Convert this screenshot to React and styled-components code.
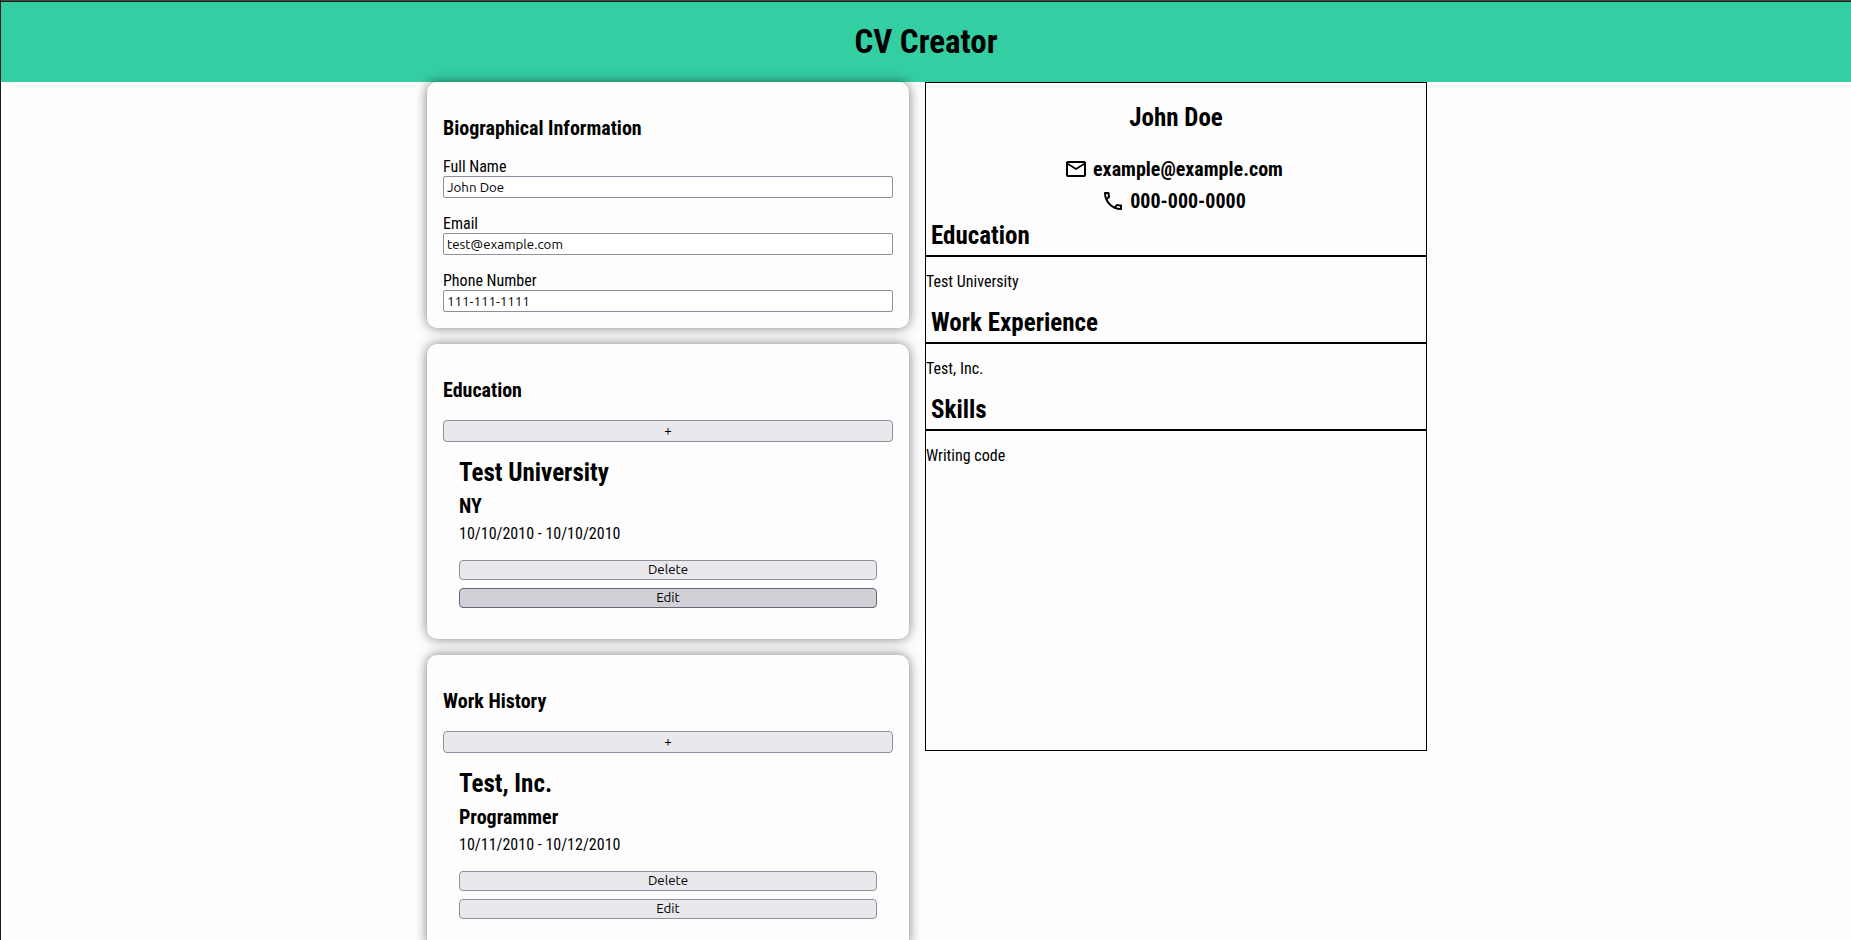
import React from "react";
import styled, { createGlobalStyle } from "styled-components";
import { MdOutlineEmail, MdOutlinePhone } from "react-icons/md";

const GlobalStyle = createGlobalStyle`
  *, *::before, *::after { box-sizing: border-box; }
  html, body { margin: 0; padding: 0; }
  body {
    background: #fdfdfd;
    color: #000;
    font-family: "Liberation Sans Narrow", "Arial Narrow", "Roboto Condensed", "Liberation Sans", sans-serif;
    font-size: 16px;
    line-height: 18px;
  }
  h1, h2, h3, p { margin: 0; }
  input, button {
    font-family: Ubuntu, "Noto Sans", sans-serif;
    line-height: 16px;
    color: #000;
  }
`;

const Page = styled.div`
  height: 100vh;
  overflow: hidden;
  border-left: 1px solid #1c1c1c;
`;

const TopEdge = styled.div`
  height: 2px;
  background: #484848;
  border-bottom: 1px solid #1c1c1c;
`;

const Header = styled.header`
  display: flex;
  align-items: center;
  justify-content: center;
  height: 80px;
  background: #34cea3;
`;

const Title = styled.h1`
  font-size: 33px;
  line-height: 36px;
`;

const Content = styled.main`
  display: grid;
  grid-template-columns: 482px 1fr;
  align-items: start;
  gap: 16px;
  max-width: 1002px;
  margin: 0 auto;
  padding-left: 2px;
`;

const Forms = styled.div`
  display: flex;
  flex-direction: column;
  gap: 16px;
`;

const Card = styled.section`
  display: flex;
  flex-direction: column;
  padding: 35px 16px 16px;
  border-radius: 10px;
  background: #fdfdfd;
  box-shadow: 0 0 12px rgba(0, 0, 0, 0.5);
`;

const CardTitle = styled.h3`
  font-size: 20px;
  line-height: 22px;
  margin-bottom: ${(p) => (p.$roomy ? 19 : 18)}px;
`;

const Fields = styled.form`
  display: flex;
  flex-direction: column;
  gap: 16px;
`;

const Field = styled.label`
  display: flex;
  flex-direction: column;
  line-height: 19px;
`;

const TextBox = styled.input`
  width: 100%;
  height: 22px;
  padding: 1px 3px;
  border: 1px solid #8f8f9d;
  border-radius: 2px;
  background: #fff;
`;

const Button = styled.button`
  width: 100%;
  height: ${(p) => (p.$tall ? 22 : 20)}px;
  padding: 0;
  border: 1px solid ${(p) => (p.$active ? "#676774" : "#8f8f9d")};
  border-radius: 4px;
  background: ${(p) => (p.$active ? "#d0d0d7" : "#e9e9ed")};
`;

const Entry = styled.article`
  padding: 16px 16px 15px;
`;

const EntryTitle = styled.h2`
  font-size: 25px;
  line-height: 30px;
  margin-bottom: 7px;
`;

const EntrySubtitle = styled.h3`
  font-size: 20px;
  line-height: 22px;
  margin-bottom: 8px;
`;

const Actions = styled.div`
  display: flex;
  flex-direction: column;
  gap: 8px;
  margin-top: 17px;
`;

const Preview = styled.section`
  min-height: 669px;
  border: 1px solid #000;
  padding-top: 20px;
`;

const PreviewName = styled.h2`
  font-size: 25px;
  line-height: 30px;
  margin-bottom: 20px;
  text-align: center;
`;

const Contact = styled.h3`
  display: flex;
  align-items: center;
  justify-content: center;
  gap: 5px;
  height: 32px;
  padding-right: 5px;
  font-size: 20px;
  line-height: 22px;

  svg { flex: none; }
`;

const PreviewHeading = styled.h2`
  padding: 4px 5px;
  border-bottom: 2px solid #000;
  font-size: 25px;
  line-height: 30px;
`;

const PreviewText = styled.p`
  padding: 16px 0 13px;
`;

const fields = [
  { id: "name", label: "Full Name", type: "text", value: "John Doe" },
  { id: "email", label: "Email", type: "email", value: "test@example.com" },
  { id: "phone", label: "Phone Number", type: "tel", value: "111-111-1111" },
];

function History({ title, name, detail, dates, editActive }) {
  return (
    <Card>
      <CardTitle $roomy>{title}</CardTitle>
      <Button $tall type="button">+</Button>
      <Entry>
        <EntryTitle>{name}</EntryTitle>
        <EntrySubtitle>{detail}</EntrySubtitle>
        <p>{dates}</p>
        <Actions>
          <Button type="button">Delete</Button>
          <Button type="button" $active={editActive}>Edit</Button>
        </Actions>
      </Entry>
    </Card>
  );
}

const sections = [
  ["Education", "Test University"],
  ["Work Experience", "Test, Inc."],
  ["Skills", "Writing code"],
];

export default function App() {
  return (
    <>
      <GlobalStyle />
      <Page>
        <TopEdge />
        <Header>
          <Title>CV Creator</Title>
        </Header>
        <Content>
          <Forms>
            <Card>
              <CardTitle>Biographical Information</CardTitle>
              <Fields>
                {fields.map((f) => (
                  <Field key={f.id} htmlFor={f.id}>
                    {f.label}
                    <TextBox id={f.id} type={f.type} defaultValue={f.value} />
                  </Field>
                ))}
              </Fields>
            </Card>
            <History
              title="Education"
              name="Test University"
              detail="NY"
              dates="10/10/2010 - 10/10/2010"
              editActive
            />
            <History
              title="Work History"
              name="Test, Inc."
              detail="Programmer"
              dates="10/11/2010 - 10/12/2010"
            />
          </Forms>
          <Preview>
            <PreviewName>John Doe</PreviewName>
            <Contact>
              <MdOutlineEmail size={24} />
              example@example.com
            </Contact>
            <Contact>
              <MdOutlinePhone size={24} />
              000-000-0000
            </Contact>
            {sections.map(([heading, text]) => (
              <div key={heading}>
                <PreviewHeading>{heading}</PreviewHeading>
                <PreviewText>{text}</PreviewText>
              </div>
            ))}
          </Preview>
        </Content>
      </Page>
    </>
  );
}
